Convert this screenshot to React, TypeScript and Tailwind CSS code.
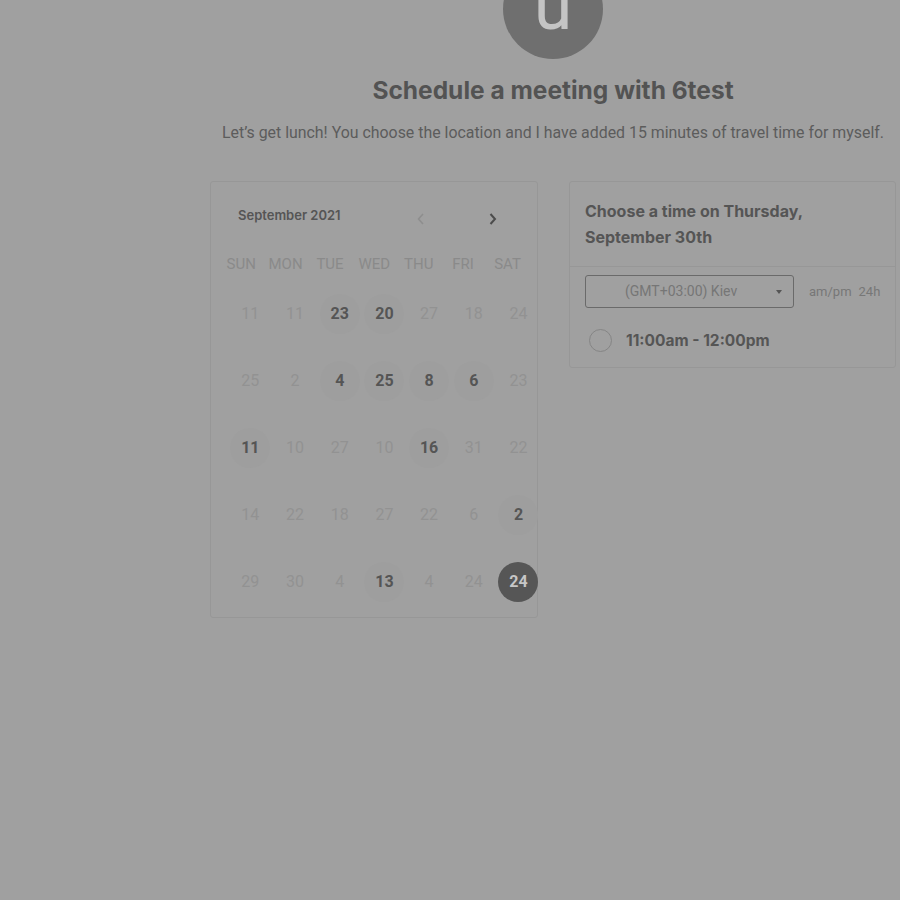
import React from "react";

type Day = { n: number; on?: boolean; sel?: boolean };

const weeks: Day[][] = [
  [{ n: 11 }, { n: 11 }, { n: 23, on: true }, { n: 20, on: true }, { n: 27 }, { n: 18 }, { n: 24 }],
  [{ n: 25 }, { n: 2 }, { n: 4, on: true }, { n: 25, on: true }, { n: 8, on: true }, { n: 6, on: true }, { n: 23 }],
  [{ n: 11, on: true }, { n: 10 }, { n: 27 }, { n: 10 }, { n: 16, on: true }, { n: 31 }, { n: 22 }],
  [{ n: 14 }, { n: 22 }, { n: 18 }, { n: 27 }, { n: 22 }, { n: 6 }, { n: 2, on: true }],
  [{ n: 29 }, { n: 30 }, { n: 4 }, { n: 13, on: true }, { n: 4 }, { n: 24 }, { n: 24, sel: true }],
];

const weekdays = ["SUN", "MON", "TUE", "WED", "THU", "FRI", "SAT"];

function DayCell({ d }: { d: Day }) {
  if (d.sel) {
    return (
      <div className="flex h-[67px] items-center justify-center">
        <span className="flex h-10 w-10 items-center justify-center rounded-full bg-[#565656] text-[16px] font-bold text-[#c6c6c6]">
          {d.n}
        </span>
      </div>
    );
  }
  if (d.on) {
    return (
      <div className="flex h-[67px] items-center justify-center">
        <span className="flex h-10 w-10 items-center justify-center rounded-full bg-[#9e9e9e] text-[16px] font-bold text-[#555]">
          {d.n}
        </span>
      </div>
    );
  }
  return (
    <div className="flex h-[67px] items-center justify-center text-[16px] text-[#929292]">
      {d.n}
    </div>
  );
}

export default function App() {
  return (
    <div
      className="min-h-[900px] bg-[#a0a0a0] pl-[210px] pr-[4px] overflow-hidden"
      style={{ fontFamily: "Roboto, 'Liberation Sans', sans-serif" }}
    >
      {/* avatar, partly scrolled out of view */}
      <div className="mx-auto -mt-[41px] flex h-[100px] w-[100px] items-center justify-center overflow-hidden rounded-full bg-[#6f6f6f]">
        <span className="-mt-[8px] text-[70px] leading-none text-[#c4c4c4]">u</span>
      </div>

      <h1
        className="mt-[16px] text-center text-[24.5px] font-bold leading-[30px] text-[#535353]"
        style={{ fontFamily: "Inter, 'Liberation Sans', sans-serif" }}
      >
        Schedule a meeting with 6test
      </h1>
      <p className="mt-[18px] text-center text-[15.9px] leading-[20px] text-[#5c5c5c]">
        Let’s get lunch! You choose the location and I have added 15 minutes of travel time for myself.
      </p>

      <div className="mt-[38px] flex gap-[31px]">
        {/* calendar */}
        <div className="h-[437px] w-[328px] rounded-[3px] border border-[#979797]">
          <div className="flex items-center pl-[27px] pt-[24px]">
            <span
              className="text-[13px] font-semibold text-[#555]"
              style={{ fontFamily: "Inter, 'Liberation Sans', sans-serif" }}
            >
              September 2021
            </span>
            <svg className="ml-[75px] mt-[6px]" width="10" height="14" viewBox="0 0 10 14" fill="none">
              <path d="M7 2 L2.5 7 L7 12" stroke="#8e8e8e" strokeWidth="1.6" />
            </svg>
            <svg className="ml-[62px] mt-[6px]" width="10" height="14" viewBox="0 0 10 14" fill="none">
              <path d="M2.5 2 L7 7 L2.5 12" stroke="#4c4c4c" strokeWidth="2" />
            </svg>
          </div>
          <div className="mt-[28px] grid grid-cols-[repeat(7,44.4px)] pl-[8px] text-[15px] leading-[20px] text-[#8a8a8a]">
            {weekdays.map((w) => (
              <div key={w} className="text-center">
                {w}
              </div>
            ))}
          </div>
          <div className="mt-[6px] grid grid-cols-[repeat(7,44.7px)] pl-[17px]">
            {weeks.map((wk, i) => wk.map((d, j) => <DayCell key={i + "-" + j} d={d} />))}
          </div>
        </div>

        {/* time picker */}
        <div className="h-[187px] w-[328px] rounded-[3px] border border-[#979797]">
          <div
            className="border-b border-[#979797] px-[15px] pb-[16px] pt-[16px] text-[16px] font-bold leading-[26px] text-[#555]"
            style={{ fontFamily: "Inter, 'Liberation Sans', sans-serif" }}
          >
            Choose a time on Thursday,
            <br />
            September 30th
          </div>
          <div className="flex items-center px-[15px] pt-[8px]">
            <div className="relative flex h-[33px] w-[209px] items-center rounded-[3px] border border-[#6a6a6a] pl-[39px] text-[14px] text-[#767676]">
              (GMT+03:00) Kiev
              <span className="absolute right-[11px] top-[14px] h-0 w-0 border-x-[3.5px] border-t-[4px] border-x-transparent border-t-[#555]" />
            </div>
            <span className="ml-[15px] text-[13px] text-[#777]">am/pm</span>
            <span className="ml-[7px] text-[13px] text-[#777]">24h</span>
          </div>
          <div className="flex items-center px-[19px] pt-[21px]">
            <span className="h-[23px] w-[23px] rounded-full border-[1.5px] border-[#858585]" />
            <span
              className="ml-[14px] text-[15.5px] font-bold text-[#555]"
              style={{ fontFamily: "Inter, 'Liberation Sans', sans-serif" }}
            >
              11:00am - 12:00pm
            </span>
          </div>
        </div>
      </div>
    </div>
  );
}
